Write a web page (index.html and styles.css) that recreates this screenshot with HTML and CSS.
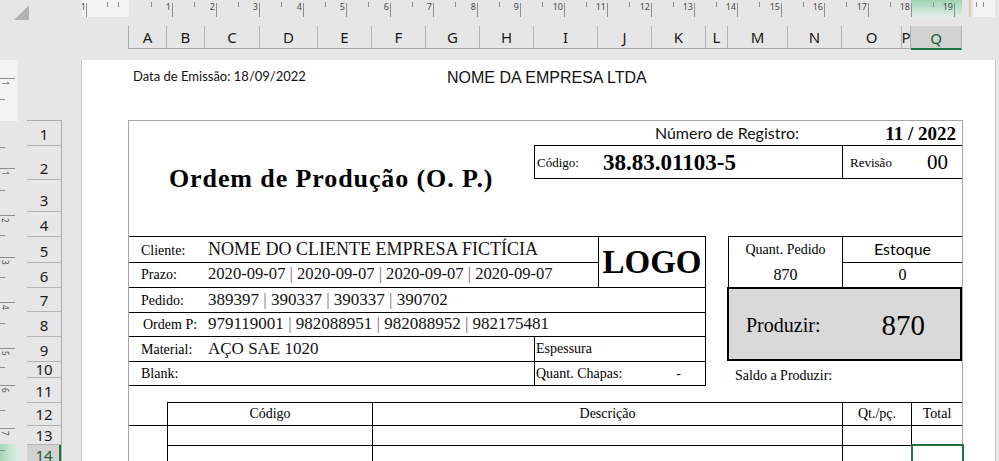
FILE: index.html
```html
<!DOCTYPE html>
<html lang="pt">
<head>
<meta charset="utf-8">
<title>Ordem de Produção</title>
<link rel="stylesheet" href="styles.css">
</head>
<body>
<div class="app">
  <div class="topbar">
    <div class="corner"><div class="tri"></div></div>
    <div class="topright">
      <svg class="hruler" width="913" height="17" viewBox="0 0 913 17">
        <defs>
          <linearGradient id="gq" x1="0" y1="0" x2="0" y2="1">
            <stop offset="0" stop-color="#9fd3b1"/>
            <stop offset="1" stop-color="#e4efe8"/>
          </linearGradient>
        </defs>
        <rect x="0" y="0" width="47" height="17" fill="#f3f3f3"/>
        <rect x="829" y="0" width="51" height="17" fill="url(#gq)"/>
        <rect x="887" y="0" width="2" height="17" fill="#e3cca8"/>
        <rect x="891" y="0" width="22" height="17" fill="#f3f3f3"/>
        <path stroke="#8e8e8e" stroke-width="1" fill="none" d="M4.5 3V17M90.5 3V17M134.5 3V17M177.5 3V17M221.5 3V17M264.5 3V17M308.5 3V17M351.5 3V17M395.5 3V17M438.5 3V17M482.5 3V17M525.5 3V17M569.5 3V17M612.5 3V17M655.5 3V17M699.5 3V17M742.5 3V17M786.5 3V17M829.5 3V17M872.5 3V17"/>
        <path stroke="#8e8e8e" stroke-width="1" fill="none" d="M25.5 2V7M36.5 2V7M69.5 2V7M112.5 2V7M156.5 2V7M199.5 2V7M243.5 2V7M286.5 2V7M330.5 2V7M373.5 2V7M417.5 2V7M460.5 2V7M504.5 2V7M547.5 2V7M591.5 2V7M634.5 2V7M677.5 2V7M721.5 2V7M764.5 2V7M808.5 2V7M851.5 2V7M894.5 2V7M901.5 2V7"/>
        <g class="rnum" text-anchor="end">
          <text x="4" y="10">1</text>
          <text x="89" y="10">1</text>
          <text x="133" y="10">2</text>
          <text x="176" y="10">3</text>
          <text x="220" y="10">4</text>
          <text x="263" y="10">5</text>
          <text x="307" y="10">6</text>
          <text x="350" y="10">7</text>
          <text x="394" y="10">8</text>
          <text x="437" y="10">9</text>
          <text x="481" y="10">10</text>
          <text x="524" y="10">11</text>
          <text x="568" y="10">12</text>
          <text x="611" y="10">13</text>
          <text x="654" y="10">14</text>
          <text x="698" y="10">15</text>
          <text x="741" y="10">16</text>
          <text x="785" y="10">17</text>
          <text x="828" y="10">18</text>
          <text x="871" y="10">19</text>
        </g>
      </svg>
      <div class="colheads">
        <div class="ch w-a">A</div><div class="ch w-b">B</div><div class="ch w-c">C</div><div class="ch w-d">D</div><div class="ch w-e">E</div><div class="ch w-f">F</div><div class="ch w-g">G</div><div class="ch w-h">H</div><div class="ch w-i">I</div><div class="ch w-j">J</div><div class="ch w-k">K</div><div class="ch w-l">L</div><div class="ch w-m">M</div><div class="ch w-n">N</div><div class="ch w-o">O</div><div class="ch w-p">P</div><div class="ch w-q sel">Q</div>
      </div>
    </div>
  </div>

  <div class="main">
    <div class="side">
      <svg class="vruler" width="18" height="401" viewBox="0 0 18 401">
        <defs>
          <linearGradient id="gr" x1="0" y1="0" x2="1" y2="0">
            <stop offset="0" stop-color="#a6d7b7"/>
            <stop offset="1" stop-color="#dcefe2"/>
          </linearGradient>
        </defs>
        <rect x="0" y="0" width="18" height="61" fill="#f3f3f3"/>
        <rect x="0" y="384" width="18" height="17" fill="url(#gr)"/>
        <path stroke="#8e8e8e" stroke-width="1" fill="none" d="M0 18.5H15M0 108.5H15M0 155.5H15M0 197.5H15M0 242.5H15M0 288.5H15M0 325.5H15M0 368.5H15"/>
        <path stroke="#8e8e8e" stroke-width="1" fill="none" d="M0 39.5H5M0 87.5H5M0 130.5H5M0 175.5H5M0 217.5H5M0 263.5H5M0 307.5H5M0 350.5H5M0 390.5H5"/>
        <g class="rnum vnum">
          <text transform="translate(2 21) rotate(90)">1</text>
          <text transform="translate(2 111) rotate(90)">1</text>
          <text transform="translate(2 158) rotate(90)">2</text>
          <text transform="translate(2 200) rotate(90)">3</text>
          <text transform="translate(2 245) rotate(90)">4</text>
          <text transform="translate(2 291) rotate(90)">5</text>
          <text transform="translate(2 328) rotate(90)">6</text>
          <text transform="translate(2 371) rotate(90)">7</text>
        </g>
      </svg>
      <div class="rowheads">
        <div class="rh h1">1</div>
        <div class="rh h2">2</div>
        <div class="rh h3">3</div>
        <div class="rh h4">4</div>
        <div class="rh h5">5</div>
        <div class="rh h6">6</div>
        <div class="rh h7">7</div>
        <div class="rh h8">8</div>
        <div class="rh h9">9</div>
        <div class="rh h10">10</div>
        <div class="rh h11">11</div>
        <div class="rh h12">12</div>
        <div class="rh h13">13</div>
        <div class="rh h14 sel">14</div>
      </div>
    </div>

    <div class="page">
      <div class="pagehead">
        <div class="emissao">Data de Emissão: 18/09/2022</div>
        <div class="empresa">NOME DA EMPRESA LTDA</div>
      </div>

      <div class="sheet">
        <div class="c reg-l">Número de Registro:</div>
        <div class="c reg-n">11 / 2022</div>

        <div class="c title">Ordem de Produção (O. P.)</div>

        <div class="c code bt bb bl">
          <span class="code-l">Código:</span>
          <span class="code-v">38.83.01103-5</span>
        </div>
        <div class="c rev bt bb bl">
          <span class="rev-l">Revisão</span>
          <span class="rev-v">00</span>
        </div>

        <div class="c frow r5 bt"><p class="ln"><span class="lbl">Cliente:</span><span class="val big">NOME DO CLIENTE EMPRESA FICTÍCIA</span></p></div>
        <div class="c frow r6 bt"><p class="ln"><span class="lbl">Prazo:</span><span class="val dates">2020-09-07 <span class="sep">|</span> 2020-09-07 <span class="sep">|</span> 2020-09-07 <span class="sep">|</span> 2020-09-07</span></p></div>
        <div class="c logo bt bl br">LOGO</div>
        <div class="c frow r7 bt br"><p class="ln"><span class="lbl">Pedido:</span><span class="val">389397 <span class="sep">|</span> 390337 <span class="sep">|</span> 390337 <span class="sep">|</span> 390702</span></p></div>
        <div class="c frow r8 bt br"><p class="ln"><span class="lbl lbl-o">Ordem P:</span><span class="val">979119001 <span class="sep">|</span> 982088951 <span class="sep">|</span> 982088952 <span class="sep">|</span> 982175481</span></p></div>
        <div class="c frow r9 bt"><p class="ln"><span class="lbl">Material:</span><span class="val">AÇO SAE 1020</span></p></div>
        <div class="c side9 bt bl br"><span class="small">Espessura</span></div>
        <div class="c frow r10 bt"><p class="ln"><span class="lbl">Blank:</span></p></div>
        <div class="c side10 bt bl br"><span class="small">Quant. Chapas:</span><span class="small dash">-</span></div>
        <div class="c r11 bt"></div>

        <div class="c qp-l bt bl"><span class="small">Quant. Pedido</span></div>
        <div class="c qp-v bl"><span class="num">870</span></div>
        <div class="c est-l bt bl"><span class="est">Estoque</span></div>
        <div class="c est-v bt bl"><span class="num">0</span></div>
        <div class="c prod">
          <span class="prod-l">Produzir:</span>
          <span class="prod-v">870</span>
        </div>
        <div class="c saldo"><span class="small">Saldo a Produzir:</span></div>

        <div class="c th t-cod bt bl">Código</div>
        <div class="c th t-desc bt bl">Descrição</div>
        <div class="c th t-qt bt bl">Qt./pç.</div>
        <div class="c th t-tot bt bl">Total</div>

        <div class="c a13 bt"></div>
        <div class="c t-cod r13 bt bl"></div>
        <div class="c t-desc r13 bt bl"></div>
        <div class="c t-qt r13 bt bl"></div>
        <div class="c t-tot r13 bt bl"></div>

        <div class="c t-cod r14 bt bl"></div>
        <div class="c t-desc r14 bt bl"></div>
        <div class="c t-qt r14 bt bl"></div>
        <div class="c t-tot r14 selcell"></div>
      </div>
    </div>
  </div>
</div>
</body>
</html>
```

FILE: styles.css
```css
* { box-sizing: border-box; }

body {
  margin: 0;
  width: 999px;
  height: 461px;
  overflow: hidden;
  background: #e6e6e6;
  font-family: "Liberation Serif", serif;
  color: #000;
  line-height: 1;
}

/* ---------- top area ---------- */
.topbar { display: flex; height: 60px; }

.corner { width: 82px; flex: none; padding: 5px 0 0 14px; }
.tri {
  width: 15px; height: 15px;
  background: #b3b3b3;
  clip-path: polygon(100% 0, 100% 100%, 0 100%);
}

.topright { width: 913px; flex: none; display: flex; flex-direction: column; }
.hruler { display: block; }
.rnum { font-family: "Noto Sans", sans-serif; font-size: 9px; fill: #4a4a4a; }
.vnum { font-size: 8px; }

.colheads {
  display: flex;
  margin: 9px 0 0 46px;
  width: 834px;
  height: 23px;
  border-left: 1px solid #ababab;
  border-bottom: 1px solid #a6a6a6;
}
.ch {
  height: 22px;
  border-right: 1px solid #b3b3b3;
  display: flex;
  align-items: center;
  justify-content: center;
  font-family: "Noto Sans", sans-serif;
  font-size: 15px;
  color: #1a1a1a;
  flex: none;
  white-space: nowrap;
}
.ch.sel {
  height: 24px;
  background: #d2d2d2;
  border-bottom: 2px solid #217346;
  color: #1d5a37;
  padding-top: 2px;
}
.w-a { width: 38px; } .w-b { width: 38px; } .w-c { width: 55px; } .w-d { width: 58px; }
.w-e { width: 54px; } .w-f { width: 54px; } .w-g { width: 54px; } .w-h { width: 54px; }
.w-i { width: 64px; } .w-j { width: 54px; } .w-k { width: 54px; } .w-l { width: 22px; }
.w-m { width: 60px; } .w-n { width: 54px; } .w-o { width: 60px; } .w-p { width: 9px; }
.w-q { width: 51px; }

/* ---------- side ---------- */
.main { display: flex; }
.side { width: 81px; flex: none; display: flex; align-items: flex-start; }
.vruler { display: block; flex: none; }

.rowheads {
  margin: 60px 0 0 9px;
  width: 35px;
  border-top: 1px solid #ababab;
  border-right: 1px solid #ababab;
}
.rh {
  display: flex;
  align-items: flex-end;
  justify-content: center;
  border-bottom: 1px solid #b3b3b3;
  font-family: "Noto Sans", sans-serif;
  font-size: 15px;
  line-height: 16px;
  padding-bottom: 3px;
  color: #1a1a1a;
}
.h1 { height: 25px; } .h2 { height: 34px; } .h3 { height: 32px; } .h4 { height: 25px; }
.h5 { height: 26px; } .h6 { height: 25px; } .h7 { height: 24px; } .h8 { height: 25px; }
.h9 { height: 25px; } .h10 { height: 16px; padding-bottom: 0; } .h11 { height: 25px; }
.h12 { height: 23px; } .h13 { height: 19px; padding-bottom: 1px; }
.h14 { height: 20px; border-bottom: 0; padding-bottom: 0; align-items: flex-start; padding-top: 2px; }
.rh.sel { background: #d2d2d2; box-shadow: inset -2px 0 0 #217346; color: #1d5a37; }

/* ---------- page ---------- */
.page {
  width: 915px;
  flex: none;
  height: 401px;
  background: #fff;
  border-left: 1px solid #c8c8c8;
  border-right: 1px solid #c8c8c8;
}
.pagehead { height: 60px; display: flex; align-items: flex-start; }
.emissao {
  width: 314px;
  margin: 10px 0 0 51px;
  font-family: Lato, "Open Sans", sans-serif;
  font-size: 13px;
  color: #111;
}
.empresa {
  margin-top: 10px;
  font-family: "Liberation Sans", Arial, sans-serif;
  font-size: 16px;
  color: #111;
}

.sheet {
  margin-left: 46px;
  width: 835px;
  border: 1px solid #a5a5a5;
  border-bottom: 0;
  display: grid;
  grid-template-columns: 38px 38px 55px 58px 54px 54px 54px 54px 64px 54px 54px 22px 60px 54px 60px 9px 51px;
  grid-template-rows: 24px 34px 32px 25px 26px 25px 25px 24px 25px 24px 17px 23px 20px 30px;
}
.c { display: flex; align-items: flex-end; min-width: 0; white-space: nowrap; }
.bt { border-top: 1px solid #000; }
.bb { border-bottom: 1px solid #000; }
.bl { border-left: 1px solid #000; }
.br { border-right: 1px solid #000; }

.reg-l {
  grid-column: 10 / 15; grid-row: 1;
  justify-content: flex-end;
  padding: 0 43px 4px 0;
  font-family: Lato, "Open Sans", sans-serif;
  font-size: 16px;
  color: #111;
}
.reg-n {
  grid-column: 15 / 18; grid-row: 1;
  justify-content: flex-end;
  padding: 0 6px 2px 0;
  font-weight: bold;
  font-size: 19px;
}

.title {
  grid-column: 2 / 9; grid-row: 2 / 4;
  padding: 0 0 19px 2px;
  font-weight: bold;
  font-size: 26px;
  letter-spacing: 0.9px;
}

.code { grid-column: 9 / 15; grid-row: 2; padding-left: 2px; }
.code-l { width: 66px; font-size: 13px; padding-bottom: 9px; }
.code-v { font-weight: bold; font-size: 23px; padding-bottom: 4px; }
.rev { grid-column: 15 / 18; grid-row: 2; padding: 0 14px 0 7px; justify-content: space-between; }
.rev-l { font-size: 13px; padding-bottom: 9px; }
.rev-v { font-size: 21px; padding-bottom: 5px; }

.frow { padding-bottom: 4px; }
.ln { margin: 0; line-height: 1; white-space: nowrap; }
.lbl { display: inline-block; width: 76px; padding-left: 12px; font-size: 14px; }
.lbl-o { padding-left: 14px; }
.val { font-size: 17px; padding-left: 3px; color: #111; }
.val.big { font-size: 18px; }
.val.dates { font-size: 16.6px; }
.sep { color: #80638a; }

.r5 { grid-column: 1 / 10; grid-row: 5; }
.r6 { grid-column: 1 / 10; grid-row: 6; }
.logo {
  grid-column: 10 / 12; grid-row: 5 / 7;
  justify-content: center;
  padding-bottom: 8px;
  font-weight: bold;
  font-size: 33px;
}
.r7 { grid-column: 1 / 12; grid-row: 7; }
.r8 { grid-column: 1 / 12; grid-row: 8; }
.r9 { grid-column: 1 / 9; grid-row: 9; }
.side9 { grid-column: 9 / 12; grid-row: 9; padding: 0 0 5px 1px; }
.r10 { grid-column: 1 / 9; grid-row: 10; }
.side10 { grid-column: 9 / 12; grid-row: 10; padding: 0 24px 4px 1px; }
.r11 { grid-column: 1 / 12; grid-row: 11; }
.small { font-size: 14px; }
.dash { margin-left: auto; }

.qp-l { grid-column: 13 / 15; grid-row: 5; justify-content: center; padding-bottom: 5px; }
.qp-v { grid-column: 13 / 15; grid-row: 6; justify-content: center; padding-bottom: 4px; }
.est-l { grid-column: 15 / 18; grid-row: 5; justify-content: center; padding-bottom: 5px; }
.est-v { grid-column: 15 / 18; grid-row: 6; justify-content: center; padding-bottom: 4px; }
.est { font-family: Lato, "Open Sans", sans-serif; font-size: 16px; }
.num { font-size: 16px; }

.prod {
  grid-column: 13 / 18; grid-row: 7 / 10;
  margin-left: -1px;
  border: 2px solid #000;
  background: #d9d9d9;
  padding-left: 17px;
}
.prod-l { font-size: 20px; padding-bottom: 24px; }
.prod-v { font-size: 29px; padding-bottom: 19px; margin: 0 35px 0 auto; }

.saldo { grid-column: 13 / 18; grid-row: 10; padding: 0 0 2px 7px; }

.th { grid-row: 12; justify-content: center; padding-bottom: 4px; font-size: 14px; }
.t-cod { grid-column: 2 / 6; }
.t-desc { grid-column: 6 / 15; }
.t-qt { grid-column: 15 / 17; }
.t-tot { grid-column: 17 / 18; }
.a13 { grid-column: 1 / 2; grid-row: 13; }
.r13 { grid-row: 13; }
.r14 { grid-row: 14; }
.selcell {
  grid-row: 14;
  border: 2px solid #217346;
  margin: -1px -2px 0 0;
}
```
